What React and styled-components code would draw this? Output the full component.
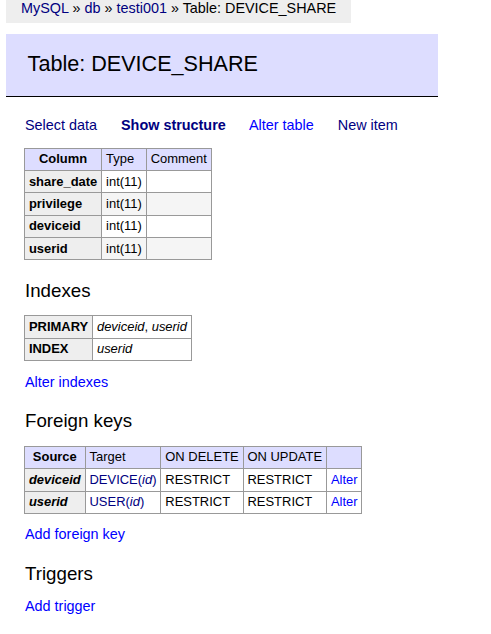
import React from 'react';
import styled, { createGlobalStyle } from 'styled-components';

const GlobalStyle = createGlobalStyle`
	body {
		margin: 0;
		background: #fff;
		color: #000;
		font: 14.4px/1.25 "Liberation Sans", Arial, Helvetica, sans-serif;
	}
`;

const Page = styled.div`
	width: fit-content;
	padding: 0 20px 20px 24px;
`;

const Breadcrumb = styled.p`
	margin: 0 0 0 -18px;
	width: fit-content;
	white-space: nowrap;
	height: 23px;
	line-height: 16px;
	padding: 0 15px;
	background: #eee;
`;

const Link = styled.a`
	color: ${(p) => (p.$visited ? 'navy' : 'blue')};
	text-decoration: none;
	font-weight: ${(p) => (p.$active ? 'bold' : 'normal')};
	cursor: pointer;
`;

const Title = styled.h2`
	font-size: 21.6px;
	line-height: 1.25;
	font-weight: normal;
	margin: 11px 0 20px -18px;
	padding: 17.3px 21.6px 17.3px;
	border-bottom: 1px solid #000;
	background: #ddf;
	color: #000;
`;

const Links = styled.p`
	margin: ${(p) => (p.$first ? '-1px' : '11.5px')} 0 0;
	padding: 0 20px ${(p) => (p.$first ? '1px' : '0')} 1px;
	line-height: 18px;

	a {
		white-space: nowrap;
		margin-right: 20px;
	}
`;

const Heading = styled.h3`
	font-size: 18.72px;
	line-height: 1.25;
	font-weight: normal;
	margin: 18.72px 0 0 1px;
`;

const Table = styled.table`
	margin: 12.96px 20px 0 0;
	border-collapse: collapse;
	font-size: 12.96px;
	line-height: 1.25;

	td,
	th {
		border: 1px solid #999;
		padding: 2.6px 3.9px;
		white-space: nowrap;
	}

	th {
		background: #eee;
		text-align: left;
	}

	thead th {
		text-align: center;
		padding: 2.6px 6.5px;
	}

	thead th,
	thead td {
		background: #ddf;
	}

	tbody tr:nth-child(2n) td {
		background: ${(p) => (p.$odds ? '#f5f5f5' : 'transparent')};
	}
`;

const Italic = styled.i`
	font-style: italic;
`;

const columns = [
	['share_date', 'int(11)'],
	['privilege', 'int(11)'],
	['deviceid', 'int(11)'],
	['userid', 'int(11)'],
];

const foreignKeys = [
	['deviceid', 'DEVICE'],
	['userid', 'USER'],
];

export default function App() {
	return (
		<>
			<GlobalStyle />
			<Page>
				<Breadcrumb>
					<Link $visited>MySQL</Link> » <Link $visited>db</Link> »{' '}
					<Link $visited>testi001</Link> » Table: DEVICE_SHARE
				</Breadcrumb>
				<Title>Table: DEVICE_SHARE</Title>

				<Links $first>
					<Link $visited>Select data</Link>{' '}
					<Link $visited $active>Show structure</Link>{' '}
					<Link>Alter table</Link>{' '}
					<Link $visited>New item</Link>
				</Links>

				<Table $odds>
					<thead>
						<tr>
							<th>Column</th>
							<td>Type</td>
							<td>Comment</td>
						</tr>
					</thead>
					<tbody>
						{columns.map(([name, type]) => (
							<tr key={name}>
								<th>{name}</th>
								<td>{type}</td>
								<td></td>
							</tr>
						))}
					</tbody>
				</Table>

				<Heading>Indexes</Heading>
				<Table>
					<tbody>
						<tr>
							<th>PRIMARY</th>
							<td>
								<Italic>deviceid</Italic>, <Italic>userid</Italic>
							</td>
						</tr>
						<tr>
							<th>INDEX</th>
							<td>
								<Italic>userid</Italic>
							</td>
						</tr>
					</tbody>
				</Table>
				<Links>
					<Link>Alter indexes</Link>
				</Links>

				<Heading>Foreign keys</Heading>
				<Table>
					<thead>
						<tr>
							<th>Source</th>
							<td>Target</td>
							<td>ON DELETE</td>
							<td>ON UPDATE</td>
							<td></td>
						</tr>
					</thead>
					<tbody>
						{foreignKeys.map(([source, target]) => (
							<tr key={source}>
								<th>
									<Italic>{source}</Italic>
								</th>
								<td>
									<Link $visited>
										{target}(<Italic>id</Italic>)
									</Link>
								</td>
								<td>RESTRICT</td>
								<td>RESTRICT</td>
								<td>
									<Link>Alter</Link>
								</td>
							</tr>
						))}
					</tbody>
				</Table>
				<Links>
					<Link>Add foreign key</Link>
				</Links>

				<Heading>Triggers</Heading>
				<Links>
					<Link>Add trigger</Link>
				</Links>
			</Page>
		</>
	);
}
